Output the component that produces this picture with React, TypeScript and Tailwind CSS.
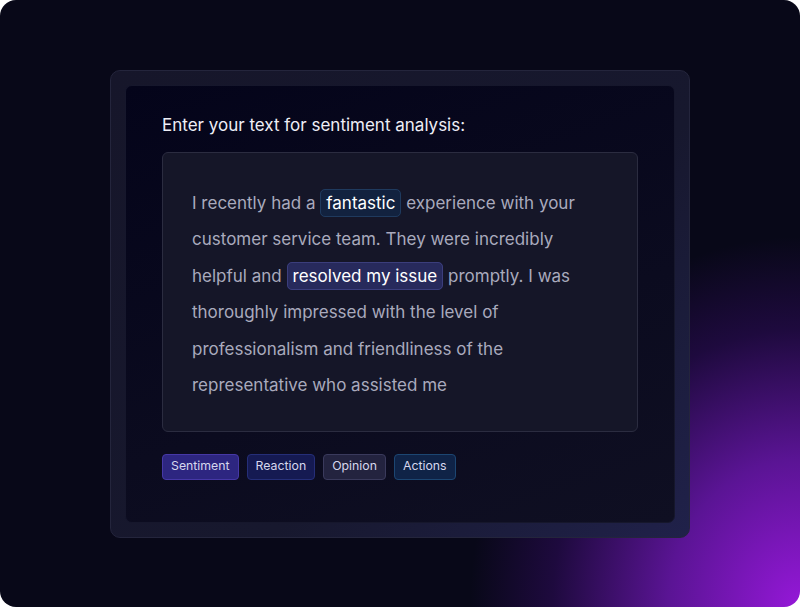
const tags = [
  { label: "Sentiment", cls: "bg-[#2d2680] border-[#4638a6]" },
  { label: "Reaction", cls: "bg-[#151a52] border-[#252e78]" },
  { label: "Opinion", cls: "bg-[#23233f] border-[#3a3a5c]" },
  { label: "Actions", cls: "bg-[#0f2347] border-[#1c4672]" },
];

function Mark({ children, cls }: { children: React.ReactNode; cls: string }) {
  return (
    <span className={`rounded-[5px] border px-[5px] py-[3px] text-white ${cls}`}>{children}</span>
  );
}

export default function App() {
  return (
    <div
      className="relative flex h-[607px] w-[800px] items-center justify-center overflow-hidden rounded-2xl bg-[#080818] bg-[radial-gradient(ellipse_330px_370px_at_100%_100%,#9518d8_0%,#5a1494_40%,#1e0a3e_75%,transparent_100%)]"
      style={{ fontFamily: "Inter, 'Noto Sans', sans-serif" }}
    >
      <div className="rounded-[10px] border border-[#24253c] bg-[linear-gradient(135deg,#16162a,#17182e_60%,#20214a)] p-[14px]">
        <div className="flex h-[438px] w-[550px] flex-col rounded-[7px] border border-[#16172c] bg-[linear-gradient(160deg,#04041a,#0b0b1f_60%,#0f0f22)] px-[36px] pt-[28px]">
          <h1 className="text-[17px] leading-[22px] text-[#eeeef6]">
            Enter your text for sentiment analysis:
          </h1>
          <div className="mt-[16px] h-[280px] rounded-[6px] border border-[#2b2c40] bg-[#151628] px-[29px] pt-[32px] pb-[28px]">
            <p className="text-[17px] leading-[36.6px] text-[#a9aabd]">
              I recently had a <Mark cls="bg-[#12223f] border-[#1f3a5e]">fantastic</Mark> experience with your
              customer service team. They were incredibly helpful and{" "}
              <Mark cls="bg-[#272a5c] border-[#3b3e7c]">resolved my issue</Mark> promptly. I was thoroughly
              impressed with the level of professionalism and friendliness of the representative who assisted me
            </p>
          </div>
          <div className="mt-[22px] flex gap-2">
            {tags.map((t) => (
              <span
                key={t.label}
                className={`flex h-[26px] items-center rounded-[4px] border px-[8px] text-[12.3px] text-[#d6d7ee] ${t.cls}`}
              >
                {t.label}
              </span>
            ))}
          </div>
        </div>
      </div>
    </div>
  );
}
